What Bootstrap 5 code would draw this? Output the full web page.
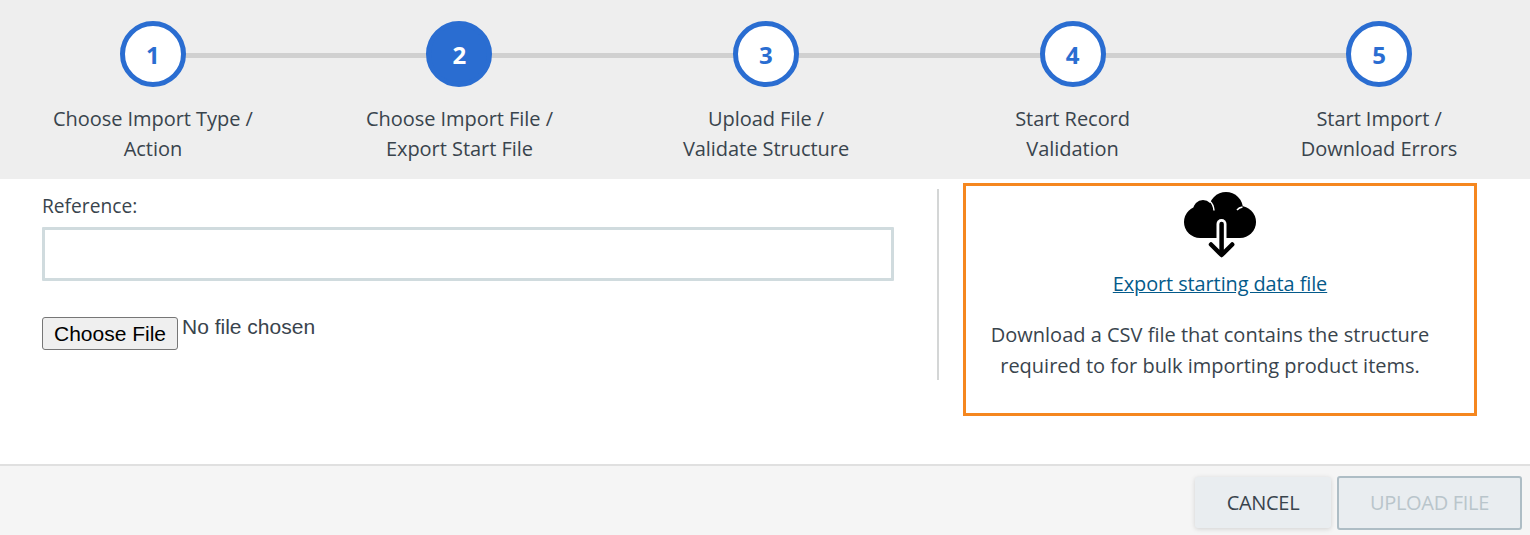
<!DOCTYPE html>
<html lang="en">
<head>
<meta charset="utf-8">
<title>Import</title>
<link href="https://cdn.jsdelivr.net/npm/bootstrap@5.3.0/dist/css/bootstrap.min.css" rel="stylesheet">
<style>
html,body{height:535px;overflow:hidden;background:#fff}
body{font-family:"Open Sans","Noto Sans",sans-serif;color:#39444d;font-size:20px}
.stepper{background:#eee;height:179px;padding-top:21px}
.stepper-row{width:1533px;margin-left:-.375px}
.step{width:306.55px;position:relative;text-align:center}
.step-line{position:absolute;left:50%;width:100%;top:32px;height:5px;background:#d0d0d0}
.step-dot{position:relative;width:66px;height:66px;border-radius:50%;border:5px solid #2a6dd1;background:#fff;color:#2a6dd1;font-weight:700;font-size:24px;line-height:58px;margin:0 auto}
.step-dot.active-dot{background:#2a6dd1;color:#fff}
.step-text{margin-top:17px;line-height:30px;font-size:20px;letter-spacing:-.04px}
.body-area{height:285px;position:relative}
.left-pane{width:895px;margin-left:42px;padding-top:13px}
.ref-label{font-size:19.2px;line-height:28px;margin-bottom:7px}
.ref-input{width:852px;height:54px;border:3px solid #d0dbde;border-radius:1px;background:#fff;display:block}
.file-row{margin-top:36px;font-family:"Liberation Sans",sans-serif;font-size:21px;color:#39444d}
.file-btn{width:136px;height:33px;border:1px solid #767676;border-radius:3px;background:#efefef;color:#000;font-size:21px;line-height:1;padding:0;margin-right:4px}
.file-note{line-height:20px}
.v-rule{width:2px;height:191px;background:#d4d6d6;margin-top:10px}
.export-box{width:514px;height:232.500px;margin:4px 0 0 24px;border:3px solid #f5871f;text-align:center;padding-top:6px}
.export-link{color:#045a8a;font-size:19.9px;letter-spacing:-.08px;line-height:28px;display:block;margin-top:12px}
.export-text{margin-top:21px;font-size:20px;line-height:31px;padding-right:20px}
.foot{height:71px;border-top:2px solid #e0e0e0;background:#f5f5f5;padding:4px 8px 0 0}
.foot .btn-cancel,.foot .btn-upload{font-size:20px;letter-spacing:-.3px;background:#e9edf0;border-radius:3px}
.foot .btn-cancel{width:136px;height:51px;color:#39444d;border:0;box-shadow:0 1px 5px rgba(0,0,0,.15)}
.foot .btn-upload{width:185px;height:54px;color:#b9c5cb;border:2px solid #aebdc5;margin-left:6px;opacity:1}
</style>
</head>
<body>
<div class="stepper overflow-hidden">
  <div class="stepper-row d-flex">
    <div class="step"><div class="step-line"></div><div class="step-dot">1</div><div class="step-text">Choose Import Type /<br>Action</div></div>
    <div class="step"><div class="step-line"></div><div class="step-dot active-dot">2</div><div class="step-text">Choose Import File /<br>Export Start File</div></div>
    <div class="step"><div class="step-line"></div><div class="step-dot">3</div><div class="step-text">Upload File /<br>Validate Structure</div></div>
    <div class="step"><div class="step-line"></div><div class="step-dot">4</div><div class="step-text">Start Record<br>Validation</div></div>
    <div class="step"><div class="step-dot">5</div><div class="step-text">Start Import /<br>Download Errors</div></div>
  </div>
</div>
<div class="body-area d-flex">
  <div class="left-pane">
    <label class="ref-label d-block" for="refField">Reference:</label>
    <input id="refField" class="ref-input" type="text">
    <div class="file-row d-flex align-items-start">
      <button class="file-btn" type="button">Choose File</button>
      <span class="file-note">No file chosen</span>
    </div>
  </div>
  <div class="v-rule"></div>
  <div class="export-box">
    <svg class="d-block mx-auto" width="72" height="66" viewBox="0 0 72 66" aria-hidden="true">
      <circle cx="19" cy="18" r="10"/>
      <circle cx="16" cy="30" r="16"/>
      <circle cx="42" cy="17" r="17"/>
      <circle cx="56" cy="30" r="16"/>
      <rect x="16" y="20" width="40" height="26"/>
      <path fill="none" stroke="#fff" stroke-width="1.5" d="M25.500 9Q29.500 12 30 18.500M58.500 15Q55 15.500 53 18"/>
      <path fill="#fff" d="M32.500 46V32a5 5 0 0 1 10 0v14z"/>
      <path fill="none" stroke="#000" stroke-width="4.500" stroke-linecap="round" stroke-linejoin="round" d="M37.600 32v30M27 52.500l10.600 10.500 10.600-10.500"/>
    </svg>
    <a class="export-link" href="#">Export starting data file</a>
    <div class="export-text">Download a CSV file that contains the structure<br>required to for bulk importing product items.</div>
  </div>
</div>
<div class="foot d-flex justify-content-end align-items-center">
  <button class="btn btn-cancel" type="button">CANCEL</button>
  <button class="btn btn-upload" type="button" disabled>UPLOAD FILE</button>
</div>
<script src="https://cdn.jsdelivr.net/npm/bootstrap@5.3.0/dist/js/bootstrap.bundle.min.js"></script>
</body>
</html>
